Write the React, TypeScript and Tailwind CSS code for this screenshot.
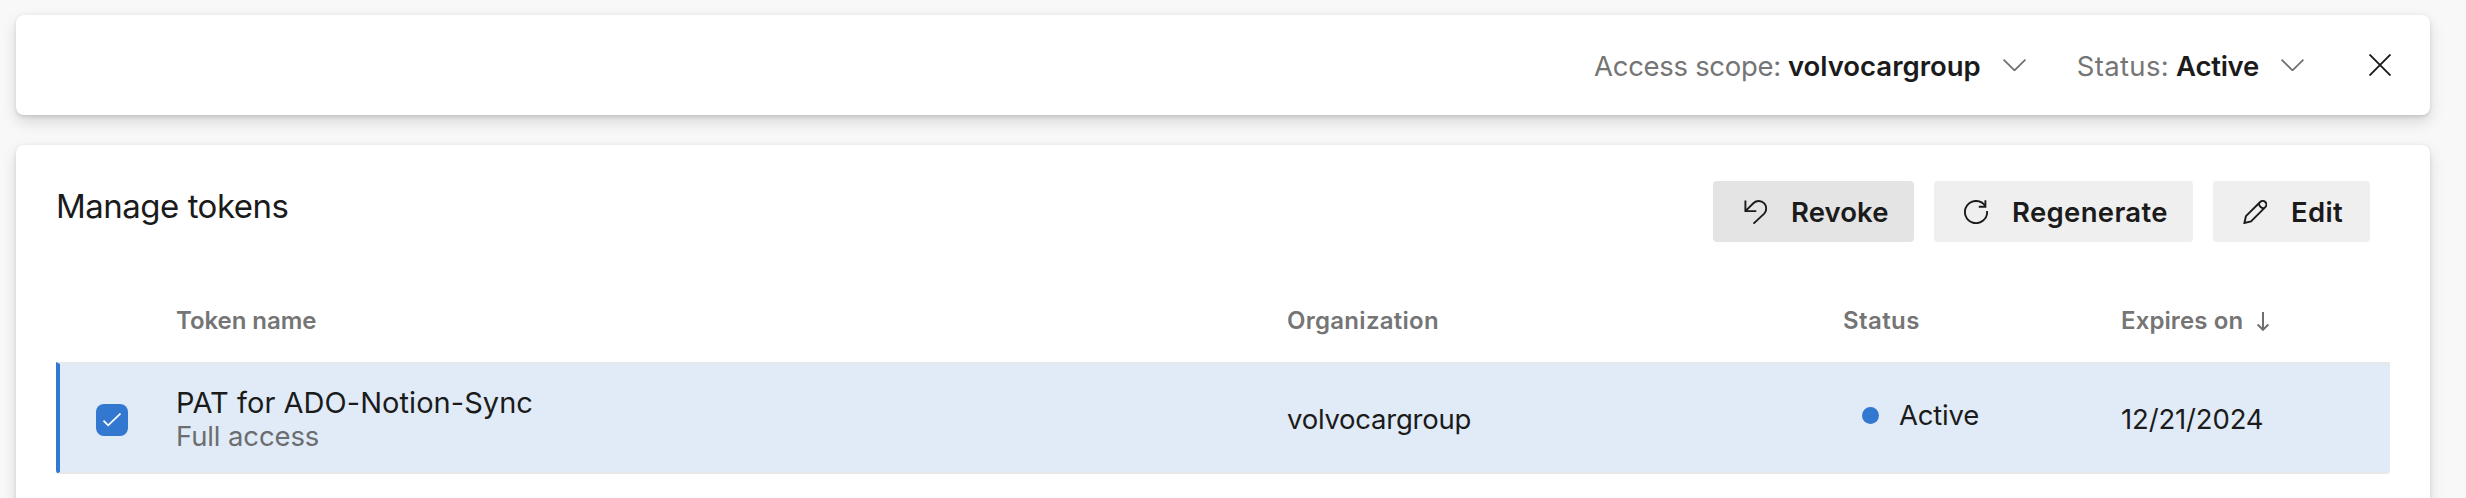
import type { ReactNode } from "react";

const panel =
  "bg-white shadow-[0_6.4px_14.4px_rgba(0,0,0,0.132),0_1.2px_3.6px_rgba(0,0,0,0.108)]";
const columns = "grid grid-cols-[116px_1111px_555px_278px_1fr] border-l-4";

function Chevron() {
  return (
    <svg className="ml-[22px] h-3 w-[23px]" viewBox="0 0 23 12" fill="none" stroke="#6f6f6f" strokeWidth="1.7">
      <path d="M.6.7 11.5 11.4 22.4.7" />
    </svg>
  );
}

function RevokeIcon() {
  return (
    <svg className="size-6" viewBox="0 0 24 24" fill="none" stroke="#1b1b1b" strokeWidth="1.9">
      <path d="M2.4.4V11.1H13.3M2.4 11.1 10.6 3A7.5 7.5 0 0 1 21.2 13.6L10.5 23.6" />
    </svg>
  );
}

function RegenerateIcon() {
  return (
    <svg className="size-6" viewBox="0 0 24 24" fill="none" stroke="#1b1b1b" strokeWidth="1.9">
      <path d="M23.1 11A11.1 11.1 0 1 1 21.3 5.9" />
      <path d="M21.4.3V6.7H14.8" />
    </svg>
  );
}

function EditIcon() {
  return (
    <svg className="size-6" viewBox="0 0 24 24" fill="none" stroke="#1b1b1b" strokeWidth="1.9">
      <path d="M1.4 23 2.9 16.2 17.2 2A3.5 3.5 0 0 1 22.3 7.1L8 21.3Z" />
      <path d="M15.8 3.4Q16.6 7.7 20.9 8.5" />
    </svg>
  );
}

function ActionButton({ className, icon, children }: { className: string; icon: ReactNode; children: ReactNode }) {
  return (
    <button className={`flex h-[61px] items-center gap-6 rounded pl-[30px] text-[27.5px] font-semibold whitespace-nowrap ${className}`}>
      {icon}
      {children}
    </button>
  );
}

export default function App() {
  return (
    <div className="flex h-[498px] flex-col gap-[30px] overflow-hidden bg-[#f8f8f8] pt-[15px] pr-9 pl-4 font-['Inter',sans-serif] text-[27.5px] leading-8 whitespace-nowrap text-[#1b1b1b]">
      <header className={`flex h-[100px] shrink-0 items-center justify-end rounded-lg pr-[39px] ${panel}`}>
        <div className="flex items-center">
          <span className="pt-0.5 tracking-[-0.3px] text-[#757575]">Access scope:</span>
          <span className="ml-[7px] pt-0.5 font-semibold">volvocargroup</span>
          <Chevron />
        </div>
        <div className="ml-[51px] flex items-center">
          <span className="pt-0.5 tracking-[0.35px] text-[#757575]">Status:</span>
          <span className="ml-[7px] pt-0.5 font-semibold tracking-[-0.25px]">Active</span>
          <Chevron />
        </div>
        <svg className="ml-[65px] size-[22px]" viewBox="0 0 22 22" fill="none" stroke="#1b1b1b" strokeWidth="1.9">
          <path d="M.5.5 21.5 21.5M21.5.5.5 21.5" />
        </svg>
      </header>

      <main className={`h-[400px] shrink-0 rounded-t-lg px-10 pt-9 ${panel}`}>
        <div className="flex items-start justify-between pr-5">
          <h1 className="text-[33px] leading-[50px] tracking-[-0.5px]">Manage tokens</h1>
          <div className="flex gap-5">
            <ActionButton className="w-[201px] bg-[#e4e4e4] tracking-[0.1px]" icon={<RevokeIcon />}>Revoke</ActionButton>
            <ActionButton className="w-[259px] bg-[#efefef] tracking-[0.33px]" icon={<RegenerateIcon />}>Regenerate</ActionButton>
            <ActionButton className="w-[157px] bg-[#efefef] tracking-[0.3px]" icon={<EditIcon />}>Edit</ActionButton>
          </div>
        </div>

        <div className={`mt-[38px] h-[82px] items-center border-transparent text-[24px] font-semibold text-[#757575] ${columns}`}>
          <span />
          <span className="tracking-[-0.05px]">Token name</span>
          <span className="tracking-[0.28px]">Organization</span>
          <span className="pl-px tracking-[0.4px]">Status</span>
          <span className="flex items-center pl-px tracking-[0.1px]">
            Expires on
            <svg className="ml-3.5 h-[19px] w-3" viewBox="0 0 12 19" fill="none" stroke="#6f6f6f" strokeWidth="2">
              <path d="M6 0V17.5M.6 12.4 6 17.8 11.4 12.4" />
            </svg>
          </span>
        </div>

        <div className={`h-28 items-center rounded-b border-y-2 border-y-[#e8e8e8] border-l-[#3277d0] bg-[#e1ebf7] ${columns}`}>
          <span className="mt-1 ml-9 flex size-8 items-center justify-center rounded-lg bg-[#3277d0]">
            <svg className="h-[14px] w-[18px]" viewBox="0 0 18 14" fill="none" stroke="#fff" strokeWidth="1.7">
              <path d="M.5 7.7 5.2 12.4 17.5.5" />
            </svg>
          </span>
          <div className="flex flex-col pt-0.5">
            <span className="text-[29px] leading-[34px] tracking-[0.05px]">PAT for ADO-Notion-Sync</span>
            <span className="leading-[33px] tracking-[-0.12px] text-[#6b6d70]">Full access</span>
          </div>
          <span className="pt-0.5 tracking-[-0.25px]">volvocargroup</span>
          <span className="flex items-center gap-5 pb-1.5 pl-5">
            <span className="size-[17px] rounded-full bg-[#3277d0]" />
            <span className="tracking-[-0.2px]">Active</span>
          </span>
          <span className="pt-0.5 pl-px tracking-[-0.15px]">12/21/2024</span>
        </div>
      </main>
    </div>
  );
}
